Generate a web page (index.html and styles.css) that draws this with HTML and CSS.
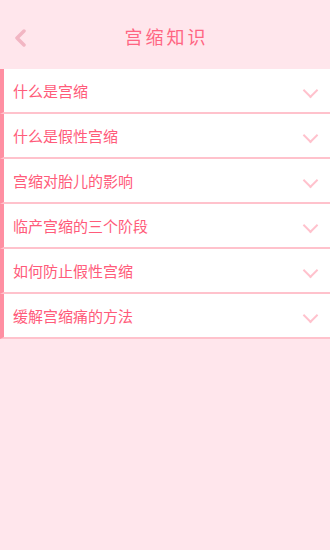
FILE: index.html
```html
<!DOCTYPE html>
<html lang="zh">
  <head>
    <meta charset="UTF-8">
    <title>宫缩知识</title>
    <link rel="stylesheet" href="styles.css">
  </head>
  <body>
    <div class="header">
      <a class="back" href="#">
        <svg width="14" height="18" viewBox="0 0 14 18"><path d="M11 2 L4 9 L11 16" fill="none" stroke="#f2b6c3" stroke-width="3.5" stroke-linecap="round" stroke-linejoin="round"/></svg>
      </a>
      <h1>宫缩知识</h1>
    </div>
    <ul class="list">
      <li class="item"><span>什么是宫缩</span><i class="arrow"></i></li>
      <li class="item"><span>什么是假性宫缩</span><i class="arrow"></i></li>
      <li class="item"><span>宫缩对胎儿的影响</span><i class="arrow"></i></li>
      <li class="item"><span>临产宫缩的三个阶段</span><i class="arrow"></i></li>
      <li class="item"><span>如何防止假性宫缩</span><i class="arrow"></i></li>
      <li class="item"><span>缓解宫缩痛的方法</span><i class="arrow"></i></li>
    </ul>
  </body>
</html>
```

FILE: styles.css
```css
html {
  background-color: #ffe6ec;
}
body {
  margin: 0;
  font-family: "Noto Sans CJK SC", sans-serif;
}
.header {
  height: 69px;
  display: flex;
  align-items: center;
  justify-content: center;
  position: relative;
}
.back {
  position: absolute;
  left: 13px;
  top: 28px;
}
h1 {
  margin: 0;
  font-size: 18px;
  font-weight: 400;
  color: #ff6582;
  letter-spacing: 3px;
  padding-left: 3px;
  padding-top: 2px;
}
.list {
  list-style: none;
  margin: 0;
  padding: 0;
}
.item {
  height: 43px;
  background: #fff;
  border-left: 4px solid #ff8fa2;
  border-bottom: 2px solid #ffc2cc;
  display: flex;
  align-items: center;
  justify-content: space-between;
  padding: 0 14px 0 9px;
  font-size: 15px;
  color: #ff5b7a;
}
.arrow {
  width: 9px;
  height: 9px;
  border-right: 2px solid #ffc2cd;
  border-bottom: 2px solid #ffc2cd;
  transform: rotate(45deg);
  margin-top: 0;
}
```
